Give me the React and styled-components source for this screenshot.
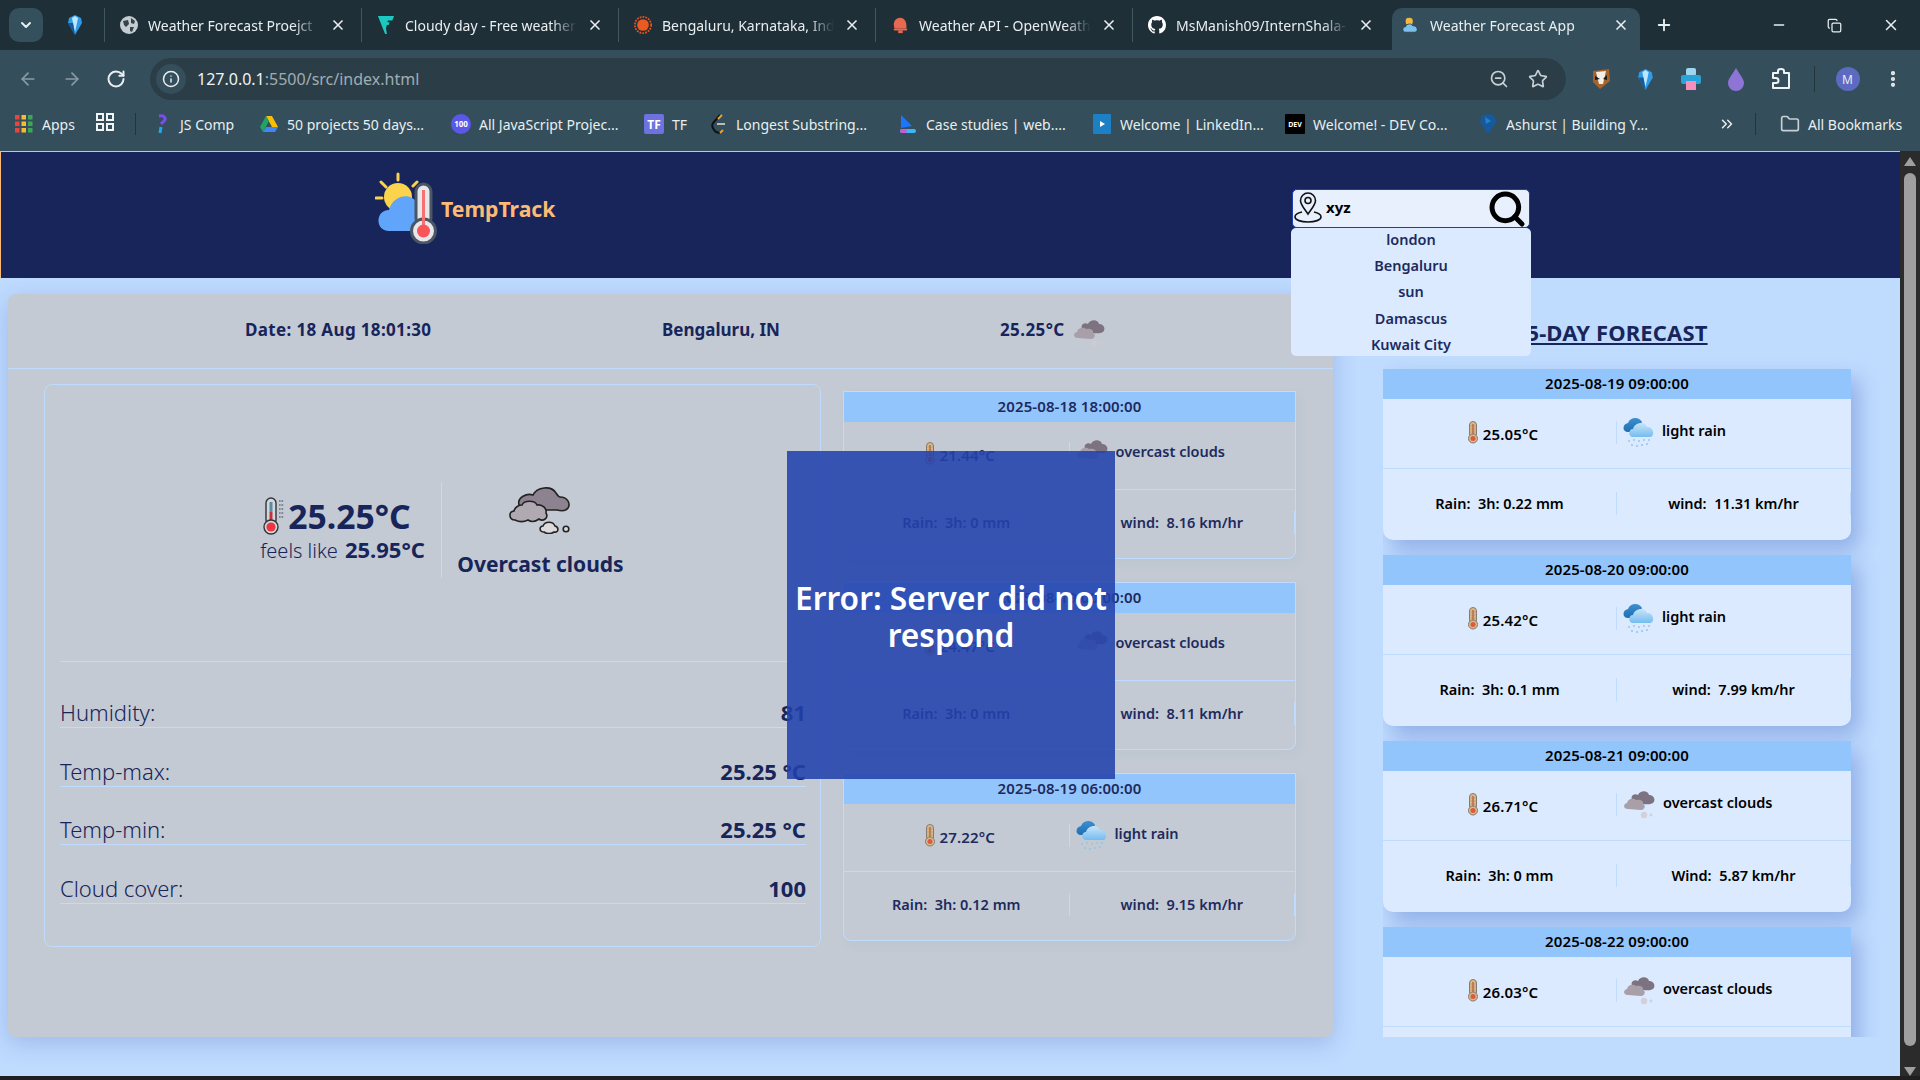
import React from 'react';
import styled, { createGlobalStyle } from 'styled-components';
import {
  ArrowLeft,
  ArrowRight,
  RotateCw,
  Info,
  ZoomOut,
  Star,
  MoreVertical,
  X,
  Plus,
  Minus,
  Copy,
  ChevronDown,
  ChevronsRight,
  Folder,
  Search,
} from 'lucide-react';

const GlobalStyle = createGlobalStyle`
  html, body {
    margin: 0;
    padding: 0;
    height: 100%;
    overflow: hidden;
    font-family: "Noto Sans", "Open Sans", sans-serif;
  }
  * { box-sizing: border-box; }
`;

const Screen = styled.div`
  width: 1920px;
  height: 1080px;
  display: flex;
  flex-direction: column;
  background-color: #1f1f1f;
  overflow: hidden;
`;

/* browser chrome */
const TabStrip = styled.div`
  height: 50px;
  display: flex;
  align-items: flex-start;
  padding-top: 8px;
  background-color: #1e2f38;
  color: #e9eef0;
`;

const TabMenuButton = styled.div`
  width: 34px;
  height: 34px;
  margin-left: 9px;
  border-radius: 10px;
  background-color: #33505c;
  display: flex;
  align-items: center;
  justify-content: center;
`;

const PinnedTab = styled.div`
  width: 61px;
  height: 34px;
  display: flex;
  align-items: center;
  padding-left: 23px;
`;

const Tab = styled.div`
  width: ${(p) => (p.$active ? '248px' : '257px')};
  height: ${(p) => (p.$active ? '42px' : '34px')};
  display: flex;
  align-items: center;
  padding: ${(p) => (p.$active ? '0 11px 8px 10px' : '0 15px')};
  gap: 10px;
  font-size: 14px;
  border-left: ${(p) => (p.$active ? 'none' : '1px solid #41575f')};
  background-color: ${(p) => (p.$active ? '#344f5b' : 'transparent')};
  border-radius: ${(p) => (p.$active ? '10px 10px 0 0' : '0')};
  margin-left: ${(p) => (p.$active ? '3px' : '0')};
`;

const TabIcon = styled.span`
  width: 18px;
  height: 20px;
  flex-shrink: 0;
  display: flex;
  align-items: center;
  justify-content: center;
`;

const TabTitle = styled.span`
  flex: 1;
  white-space: nowrap;
  overflow: hidden;
  mask-image: linear-gradient(to right, #000 85%, transparent);
`;

const NewTab = styled.div`
  margin-left: 15px;
  height: 34px;
  display: flex;
  align-items: center;
`;

const WindowButtons = styled.div`
  margin-left: auto;
  height: 34px;
  display: flex;
  align-items: center;
  gap: 40px;
  padding-right: 20px;
`;

const Toolbar = styled.div`
  height: 58px;
  display: flex;
  align-items: flex-start;
  padding: 8px 0 0 18px;
  background-color: #344f5b;
  color: #e9eef0;
`;

const NavGroup = styled.div`
  width: 132px;
  height: 42px;
  display: flex;
  align-items: center;
  gap: 24px;
`;

const Omnibox = styled.div`
  width: 1416px;
  height: 42px;
  border-radius: 21px;
  background-color: #2b3e47;
  display: flex;
  align-items: center;
  padding: 0 18px 0 6px;
  font-size: 16px;
`;

const SiteInfo = styled.div`
  width: 30px;
  height: 30px;
  border-radius: 50%;
  background-color: #344f5b;
  display: flex;
  align-items: center;
  justify-content: center;
  margin-right: 11px;
`;

const UrlHost = styled.span`
  color: #f0f4f5;
`;

const UrlPath = styled.span`
  color: #a0adb2;
`;

const OmniIcons = styled.div`
  margin-left: auto;
  display: flex;
  align-items: center;
  gap: 19px;
  color: #c7d0d4;
`;

const Extensions = styled.div`
  flex: 1;
  height: 42px;
  display: flex;
  align-items: center;
  padding-left: 12px;
`;

const ExtSlot = styled.div`
  width: 45px;
  flex-shrink: 0;
  display: flex;
  align-items: center;
  justify-content: center;
`;

const ToolbarSep = styled.div`
  width: 1px;
  height: 26px;
  background-color: #22343c;
  margin: 0 10px 0 11px;
`;

const Avatar = styled.div`
  width: 24px;
  height: 24px;
  border-radius: 50%;
  background-color: #5c6bc0;
  color: #e8eaf6;
  font-size: 12px;
  display: flex;
  align-items: center;
  justify-content: center;
`;

const BookmarksBar = styled.div`
  height: 43px;
  display: flex;
  align-items: flex-start;
  padding: 5px 0 0 14px;
  background-color: #344f5b;
  color: #e9eef0;
  font-size: 14px;
`;

const Bookmark = styled.div`
  width: ${(p) => p.$width}px;
  height: 22px;
  display: flex;
  align-items: center;
  gap: 8px;
  white-space: nowrap;
  flex-shrink: 0;
`;

const BookmarkGlyph = styled.span`
  width: 20px;
  height: 22px;
  flex-shrink: 0;
  display: flex;
  align-items: center;
  justify-content: center;
`;

const BookmarksEnd = styled.div`
  margin-left: auto;
  height: 22px;
  display: flex;
  align-items: center;
  padding-right: 18px;
`;

const BookmarkSep = styled.div`
  width: 1px;
  height: 22px;
  background-color: #22343c;
  margin: ${(p) => (p.$end ? '0 24px 0 19px' : '0 16px 0 21px')};
`;

/* page */
const Viewport = styled.div`
  height: 927px;
  display: flex;
  border-bottom: 2px solid #1f1f1f;
`;

const Page = styled.div`
  width: 1900px;
  background-color: #bfdbfe;
  display: flex;
  flex-direction: column;
`;

const Header = styled.header`
  height: 127px;
  flex-shrink: 0;
  background-color: #17255a;
  border-top: 1px solid #fdba74;
  border-left: 1px solid #fdba74;
  display: flex;
  align-items: flex-start;
  padding: 20px 0 0 374px;
`;

const Logo = styled.div`
  width: 852px;
  display: flex;
  align-items: center;
  height: 72px;
`;

const LogoText = styled.span`
  font-size: 21.2px;
  font-weight: 700;
  color: #fdba74;
`;

const SearchWrap = styled.div`
  position: relative;
  margin: 17px 0 0 65px;
`;

const SearchBox = styled.div`
  width: 238px;
  height: 39px;
  background-color: #e8effd;
  border: 1px solid #1e40af;
  border-radius: 5px;
  display: flex;
  align-items: center;
  padding: 0 2px 0 1px;
  font-size: 15px;
  font-weight: 700;
  color: #000;
`;

const PinHolder = styled.span`
  display: flex;
  margin-top: -3px;
`;

const SearchValue = styled.span`
  flex: 1;
  margin: -3px 0 0 4px;
`;

const Suggestions = styled.ul`
  position: absolute;
  top: 39px;
  left: -1px;
  width: 240px;
  height: 128px;
  margin: 0;
  padding: 0;
  list-style: none;
  background-color: #dbeafe;
  border-radius: 5px;
  z-index: 5;
`;

const Suggestion = styled.li`
  height: 26.2px;
  line-height: 22px;
  text-align: center;
  font-size: 14.5px;
  font-weight: 600;
  color: #1e2a5e;
`;

const Content = styled.div`
  flex: 1;
  position: relative;
  display: flex;
  align-items: flex-start;
  gap: 50px;
  padding: 16px 0 0 8px;
  overflow: hidden;
`;

const MainPanel = styled.section`
  width: 1325px;
  height: 743px;
  flex-shrink: 0;
  background-color: #c3cad3;
  border-radius: 8px;
  box-shadow: 0 6px 24px rgba(30, 64, 175, 0.22);
`;

const SummaryBar = styled.div`
  height: 75px;
  display: grid;
  grid-template-columns: 417px 338px auto;
  align-items: center;
  padding: 0 0 3px 237px;
  border-bottom: 1px solid #bfdbfe;
  font-size: 17px;
  font-weight: 700;
  color: #17255a;
`;

const SummaryDate = styled.span`
  letter-spacing: 0.35px;
`;

const SummaryTemp = styled.div`
  display: flex;
  align-items: center;
  gap: 8px;
  letter-spacing: 0.4px;
`;

const SummaryIcon = styled.span`
  display: flex;
  margin-top: 8px;
`;

const PanelBody = styled.div`
  display: flex;
  align-items: flex-start;
  gap: 22px;
  padding: 15px 0 0 36px;
`;

const CurrentCard = styled.div`
  width: 777px;
  height: 563px;
  border: 1px solid #bfdbfe;
  border-radius: 8px;
  padding: 0 14px 0 15px;
  color: #17255a;
`;

const CurrentTop = styled.div`
  height: 277px;
  display: flex;
  align-items: center;
  justify-content: center;
  padding: 14px 0 0 31px;
  border-bottom: 1px solid #bfdbfe;
`;

const TempBlock = styled.div`
  width: 184px;
  padding-right: 13px;
  display: flex;
  flex-direction: column;
  align-items: center;
  height: 96px;
  justify-content: center;
  border-right: 1px solid #bfdbfe;
`;

const TempLine = styled.div`
  display: flex;
  align-items: center;
  font-size: 33.7px;
  font-weight: 700;
  line-height: 40px;
  gap: 3px;
  margin-left: -13px;
`;

const FeelsLine = styled.div`
  font-size: 20px;
  font-weight: 300;
  line-height: 26px;
  white-space: nowrap;
`;

const FeelsValue = styled.b`
  font-size: 22px;
  font-weight: 700;
  margin-left: 7px;
`;

const ConditionBlock = styled.div`
  width: 198px;
  display: flex;
  flex-direction: column;
  align-items: center;
  font-size: 21px;
  font-weight: 700;
  white-space: nowrap;
  gap: 16px;
  padding-top: 2px;
`;

const StatRows = styled.div`
  padding-top: 8px;
`;

const StatRow = styled.div`
  height: ${(p) => (p.$first ? '58px' : '58.5px')};
  display: flex;
  align-items: flex-end;
  justify-content: space-between;
  border-bottom: 1px solid #bfdbfe;
  font-size: 22px;
  font-weight: 300;
  line-height: 30px;
`;

const StatValue = styled.span`
  font-weight: 700;
`;

const HourlyColumn = styled.div`
  width: 453px;
  display: flex;
  flex-direction: column;
  gap: 23px;
  padding-top: 7px;
  color: #1e2a5e;
`;

const ForecastCard = styled.article`
  height: ${(p) => (p.$daily ? '171px' : '168px')};
  flex-shrink: 0;
  border: ${(p) => (p.$daily ? 'none' : '1px solid #bfdbfe')};
  background-color: ${(p) => (p.$daily ? '#dbeafe' : 'transparent')};
  color: ${(p) => (p.$daily ? '#000' : '#1e2a5e')};
  border-radius: ${(p) => (p.$daily ? '0 0 10px 10px' : '0 0 8px 8px')};
  box-shadow: ${(p) => (p.$daily ? '8px 10px 20px rgba(30, 64, 175, 0.28)' : '4px 4px 12px rgba(30, 64, 175, 0.04)')};
  font-size: 14.5px;
  font-weight: 600;
`;

const CardHead = styled.div`
  height: 30px;
  background-color: #93c5fd;
  text-align: center;
  line-height: 29px;
  font-size: 15px;
  letter-spacing: 0.1px;
  font-weight: 600;
`;

const CardRow = styled.div`
  height: ${(p) => p.$height}px;
  display: grid;
  grid-template-columns: 1fr 1fr;
  align-items: center;
  padding-bottom: ${(p) => p.$lift}px;
  border-top: ${(p) => (p.$top ? 'none' : '1px solid #bfdbfe')};
`;

const CardCell = styled.div`
  height: 23px;
  display: flex;
  align-items: center;
  justify-content: center;
  border-right: 1px solid #bfdbfe;
  white-space: nowrap;
  gap: 5px;
`;

const TempCell = styled(CardCell)`
  padding-left: 7px;
`;

const WeatherCell = styled.div`
  height: 23px;
  display: flex;
  align-items: center;
  gap: 8px;
  padding-left: 6px;
  white-space: nowrap;
`;

const WeatherText = styled.span`
  margin-top: -5px;
`;

const TempText = styled.span`
  margin-top: 2px;
  font-size: 15px;
  letter-spacing: 0.15px;
`;

const DailyColumn = styled.aside`
  width: 517px;
  height: 743px;
  flex-shrink: 0;
  overflow: hidden;
`;

const DailyTitle = styled.h2`
  width: 468px;
  height: 75px;
  margin: 0;
  padding-top: 21px;
  text-align: center;
  font-size: 22px;
  letter-spacing: 0.15px;
  line-height: 34px;
  font-weight: 700;
  color: #17255a;
  text-decoration: underline;
`;

const DailyList = styled.div`
  width: 468px;
  display: flex;
  flex-direction: column;
  gap: 15px;
`;

const ErrorToast = styled.div`
  position: absolute;
  left: 787px;
  top: 173px;
  width: 328px;
  height: 328px;
  background-color: rgba(34, 66, 172, 0.88);
  color: #fff;
  display: flex;
  align-items: center;
  justify-content: center;
  text-align: center;
  font-size: 31.7px;
  font-weight: 600;
  line-height: 37px;
  padding: 2px 6px 0;
  z-index: 4;
`;

/* fake browser scrollbar */
const ScrollTrack = styled.div`
  width: 20px;
  background-color: #2b2b2b;
  display: flex;
  flex-direction: column;
  align-items: center;
  padding-top: 6px;
`;

const ScrollThumb = styled.div`
  width: 12px;
  height: 884px;
  margin-top: 7px;
  border-radius: 6px;
  background-color: #9f9f9f;
`;

const ScrollArrow = styled.div`
  width: 0;
  height: 0;
  border-left: 6px solid transparent;
  border-right: 6px solid transparent;
  border-bottom: ${(p) => (p.$down ? 'none' : '9px solid #9f9f9f')};
  border-top: ${(p) => (p.$down ? '9px solid #9f9f9f' : 'none')};
  margin-top: ${(p) => (p.$down ? '21px' : '0')};
`;

/* drawn icons */
const Gem = ({ size = 18 }) => (
  <svg width={size} height={size + 4} viewBox="0 0 18 22">
    <path d="M3 4 L9 1 L15 4 L16 9 L9 21 L2 9 Z" fill="#2f9be8" />
    <path d="M6 4 L9 2 L12 4 L11 9 L9 18 L7 9 Z" fill="#bfe6ff" />
    <path d="M9 21 L2 9 L7 9 Z" fill="#135a9a" />
  </svg>
);

const Globe = () => (
  <svg width="18" height="18" viewBox="0 0 18 18">
    <circle cx="9" cy="9" r="9" fill="#c5ccd0" />
    <path d="M3 5 L8 4 L9 8 L6 11 L4 9 Z M11 2 L15 5 L14 8 L11 7 Z M10 11 L14 11 L12 16 L10 15 Z" fill="#34424a" />
  </svg>
);

const Vee = () => (
  <svg width="20" height="22" viewBox="0 0 20 22">
    <path d="M1 1 L19 1 L17 6 L12 6 L10 15 L11 21 L9 21 Z" fill="#1cc8c0" />
    <path d="M8 8 L14 8 L13 11 L9 11 Z" fill="#1cc8c0" />
  </svg>
);

const SunBadge = () => (
  <svg width="20" height="20" viewBox="0 0 20 20">
    <circle cx="10" cy="10" r="9" fill="none" stroke="#e2521f" strokeWidth="2" strokeDasharray="2 1.2" />
    <circle cx="10" cy="10" r="6.5" fill="#ea5a22" />
  </svg>
);

const Blob = () => (
  <svg width="20" height="20" viewBox="0 0 20 20">
    <path d="M4 14 C1 6 6 2 10 2 C15 2 18 7 17 14 Z" fill="#e8694f" />
    <rect x="3" y="14" width="15" height="2" rx="1" fill="#e8694f" />
    <rect x="8" y="16" width="5" height="3" fill="#e8694f" />
  </svg>
);

const GithubMark = () => (
  <svg width="20" height="20" viewBox="0 0 16 16" fill="#fff">
    <path d="M8 0C3.58 0 0 3.58 0 8c0 3.54 2.29 6.53 5.47 7.59.4.07.55-.17.55-.38 0-.19-.01-.82-.01-1.49-2.01.37-2.53-.49-2.69-.94-.09-.23-.48-.94-.82-1.13-.28-.15-.68-.52-.01-.53.63-.01 1.08.58 1.23.82.72 1.21 1.87.87 2.33.66.07-.52.28-.87.51-1.07-1.78-.2-3.64-.89-3.64-3.95 0-.87.31-1.59.82-2.15-.08-.2-.36-1.02.08-2.12 0 0 .67-.21 2.2.82.64-.18 1.32-.27 2-.27s1.36.09 2 .27c1.53-1.04 2.2-.82 2.2-.82.44 1.1.16 1.92.08 2.12.51.56.82 1.27.82 2.15 0 3.07-1.87 3.75-3.65 3.95.29.25.54.73.54 1.48 0 1.07-.01 1.93-.01 2.2 0 .21.15.46.55.38A8.01 8.01 0 0016 8c0-4.42-3.58-8-8-8z" />
  </svg>
);

const MiniWeather = () => (
  <svg width="20" height="20" viewBox="0 0 20 20">
    <circle cx="8" cy="6" r="4.5" fill="#f4b942" stroke="#2a3a44" strokeWidth="0.8" />
    <path d="M4 18 C0 18 0 12 4 12 C5 8 11 8 12 11 C17 10 19 18 14 18 Z" fill="#7cc0ee" stroke="#2a3a44" strokeWidth="0.8" />
  </svg>
);

const BookmarkIcon = ({ kind }) => {
  if (kind === 'js') {
    return (
      <svg width="16" height="20" viewBox="0 0 16 20">
        <path d="M5 2 C11 1 13 5 9 8 L7 10" fill="none" stroke="#7b4df0" strokeWidth="3" />
        <path d="M7 13 L6 19" stroke="#1fa8f0" strokeWidth="3" />
      </svg>
    );
  }
  if (kind === 'drive') {
    return (
      <svg width="20" height="18" viewBox="0 0 20 18">
        <path d="M7 1 L13 1 L19 12 L13 12 Z" fill="#fbbc04" />
        <path d="M7 1 L1 12 L4 17 L10 6 Z" fill="#1fa463" />
        <path d="M4 17 L16 17 L19 12 L7 12 Z" fill="#4285f4" />
      </svg>
    );
  }
  if (kind === 'hundred') {
    return (
      <svg viewBox="0 0 20 20" width="20" height="20">
        <circle cx="10" cy="10" r="10" fill="#5b57e8" />
        <text x="10" y="12.5" textAnchor="middle" fontSize="8" fontWeight="700" fill="#fff">100</text>
      </svg>
    );
  }
  if (kind === 'tf') {
    return (
      <svg width="20" height="20" viewBox="0 0 20 20">
        <rect width="20" height="20" rx="2" fill="#6c72e0" />
        <text x="10" y="14.5" textAnchor="middle" fontSize="12" fontWeight="700" fill="#fff">TF</text>
      </svg>
    );
  }
  if (kind === 'lc') {
    return (
      <svg width="16" height="20" viewBox="0 0 16 20">
        <path d="M10 1 L3 9 C1 12 3 15 6 18 L10 19" fill="none" stroke="#111" strokeWidth="2" />
        <path d="M12 1 L8 5 M10 19 L13 16" stroke="#f59f1c" strokeWidth="2" />
        <path d="M7 10 L15 10" stroke="#bbb" strokeWidth="2" />
      </svg>
    );
  }
  if (kind === 'case') {
    return (
      <svg width="20" height="20" viewBox="0 0 20 20">
        <path d="M3 1 L14 12 L3 14 Z" fill="#1976ff" />
        <rect x="2" y="15" width="16" height="4" rx="2" fill="#39b8f5" />
        <rect x="2" y="15" width="7" height="4" rx="2" fill="#c85bd6" />
      </svg>
    );
  }
  if (kind === 'linkedin') {
    return (
      <svg width="18" height="20" viewBox="0 0 18 20">
        <rect width="18" height="20" rx="1" fill="#1d7fc4" />
        <path d="M7 7 L12 10 L7 13 Z" fill="#fff" />
      </svg>
    );
  }
  if (kind === 'dev') {
    return (
      <svg width="20" height="20" viewBox="0 0 20 20">
        <rect width="20" height="20" rx="1" fill="#000" />
        <text x="10" y="13" textAnchor="middle" fontSize="7" fontWeight="700" fill="#fff">DEV</text>
      </svg>
    );
  }
  return (
    <svg width="20" height="22" viewBox="0 0 20 22">
      <path d="M4 2 L14 1 L19 8 L10 21 L2 9 Z" fill="#155a9c" />
      <path d="M7 4 L13 8 L8 11 Z" fill="#2d7fc9" />
    </svg>
  );
};

const AppsGrid = () => (
  <svg width="18" height="18" viewBox="0 0 18 18">
    {[0, 1, 2].map((row) =>
      ['#e8453c', '#f9bb2d', '#3aa757'].map((color, col) => (
        <rect key={`${row}-${col}`} x={col * 6.5} y={row * 6.5} width="4.5" height="4.5" fill={color} />
      ))
    )}
  </svg>
);

const QrGrid = () => (
  <svg width="18" height="18" viewBox="0 0 18 18" fill="none" stroke="#f0f4f5" strokeWidth="2">
    <rect x="1" y="1" width="6" height="6" />
    <rect x="11" y="1" width="6" height="6" />
    <rect x="1" y="11" width="6" height="6" />
    <rect x="11" y="11" width="6" height="6" />
  </svg>
);

const BadgerIcon = () => (
  <svg width="22" height="22" viewBox="0 0 22 22">
    <path d="M3 3 L19 1 L20 13 L10 21 L3 14 Z" fill="#a8622c" />
    <path d="M6 4 L16 3 L13 16 L9 16 Z" fill="#f2efe8" />
    <path d="M5 8 L10 11 L5 12 Z M17 7 L13 11 L17 12 Z" fill="#1b1b1b" />
  </svg>
);

const PrinterIcon = () => (
  <svg width="22" height="24" viewBox="0 0 22 24">
    <rect x="6" y="1" width="10" height="8" rx="2" fill="#9fd6ef" />
    <rect x="1" y="8" width="20" height="9" rx="2" fill="#29a3d8" />
    <rect x="6" y="14" width="10" height="9" fill="#f58fbb" />
  </svg>
);

const DropIcon = () => (
  <svg width="18" height="24" viewBox="0 0 18 24">
    <path d="M9 1 C13 8 17 12 17 16 A8 8 0 0 1 1 16 C1 12 5 8 9 1 Z" fill="#8f74d8" />
  </svg>
);

const ExtensionPiece = () => (
  <svg width="20" height="22" viewBox="0 0 20 22" fill="none" stroke="#f0f4f5" strokeWidth="2" strokeLinejoin="round">
    <path d="M2 5 H7 V3 A3 2 0 0 1 13 3 V5 H18 V20 H2 V15 H5 A2.5 2.5 0 0 0 5 10 H2 Z" />
  </svg>
);

const LogoMark = () => (
  <svg width="66" height="72" viewBox="0 0 66 72">
    <g stroke="#fcd34d" strokeWidth="3" strokeLinecap="round">
      <path d="M23 2 V8 M6 10 L11 15 M42 10 L38 14 M1 26 H7" />
    </g>
    <circle cx="23" cy="25" r="14" fill="#fcd34d" />
    <path d="M14 59 C0 59 0 38 14 38 C18 22 38 20 42 32 L46 59 Z" fill="#60a5fa" />
    <rect x="41" y="12" width="15" height="42" rx="7.5" fill="#e5e7eb" stroke="#4b5563" strokeWidth="3" />
    <circle cx="48.5" cy="59" r="12" fill="#e5e7eb" stroke="#4b5563" strokeWidth="3" />
    <rect x="47" y="18" width="3" height="38" fill="#f87171" />
    <circle cx="48.5" cy="59" r="6.5" fill="#f8555a" />
  </svg>
);

const PinIcon = () => (
  <svg width="28" height="31" viewBox="0 0 28 31" fill="none" stroke="#111" strokeWidth="1.6">
    <path d="M14 22 C9 15 6.5 12.5 6.5 8.5 A7.5 7.5 0 0 1 21.5 8.5 C21.5 12.5 19 15 14 22 Z" />
    <circle cx="14" cy="8.5" r="3" />
    <path d="M8 20 C3 21 1 23 1 25 C1 28 7 30 14 30 C21 30 27 28 27 25 C27 23 25 21 20 20" />
  </svg>
);

const BigThermo = () => (
  <svg width="24" height="38" viewBox="0 0 24 38">
    <rect x="5" y="1" width="10" height="27" rx="5" fill="#cfd8df" stroke="#333" strokeWidth="1.4" />
    <rect x="8.5" y="5" width="3" height="10" fill="#5b8aa3" />
    <rect x="8.5" y="15" width="3" height="14" fill="#c8313c" />
    <circle cx="10" cy="30" r="7" fill="#cfd8df" stroke="#333" strokeWidth="1.4" />
    <circle cx="10" cy="30" r="4.6" fill="#ef3340" />
    <path d="M18 4 H23 M18 8 H23 M18 12 H23 M18 16 H23 M18 20 H23" stroke="#6b7280" strokeWidth="1.4" strokeDasharray="1.6 .8" />
  </svg>
);

const SmallThermo = () => (
  <svg width="10" height="23" viewBox="0 0 10 23">
    <rect x="1.5" y="0.5" width="7" height="16" rx="3.5" fill="#d9b98a" stroke="#857a6c" />
    <rect x="4" y="3" width="2" height="12" fill="#c97a55" />
    <path d="M2.5 5 H7.5 M2.5 8 H7.5 M2.5 11 H7.5" stroke="#a08a6a" strokeWidth="0.6" />
    <circle cx="5" cy="17.5" r="4.5" fill="#d9b98a" stroke="#857a6c" />
    <circle cx="5" cy="17.5" r="2.5" fill="#dd5a3f" />
  </svg>
);

const BigCloud = () => (
  <svg width="64" height="49" viewBox="0 0 64 49" stroke="#222" strokeWidth="1.6">
    <path d="M10 20 C8 12 18 8 24 10 C28 2 42 0 47 8 C49 11 50 12 51 12 C58 12 62 18 59 23 C57 26 52 26 48 25 L20 25 Z" fill="#8d8290" />
    <path d="M6 35 C0 35 -1 27 5 26 C6 22 10 20 13 20 C15 15 26 15 28 20 C34 19 38 24 37 28 C40 33 34 37 30 34 C26 37 22 37 19 35 C15 37 10 37 6 35 Z" fill="#b1a9b2" />
    <path d="M35 47 C30 47 30 41 34 41 C36 36 44 36 46 41 C50 42 50 48 45 47 C42 49 38 49 35 47 Z" fill="#ddd9dc" />
    <circle cx="57" cy="44" r="2.8" fill="#ddd9dc" />
  </svg>
);

const SmallCloud = () => (
  <svg width="32" height="30" viewBox="0 0 32 30">
    <path d="M9 10 C7 5 12 3 15 5 C17 0 25 0 26 5 C31 5 33 10 30 13 C27 15 22 14 20 14 L9 14 Z" fill="#7c7280" />
    <path d="M5 19 C0 19 0 14 4 13 C5 8 11 8 13 10 C17 9 21 11 20 14 C23 15 22 20 18 20 Z" fill="#a89fa9" />
    <circle cx="21" cy="25" r="3.2" fill="#cfcad0" opacity="0.8" />
    <circle cx="28" cy="25" r="1.4" fill="#cfcad0" opacity="0.8" />
  </svg>
);

const RainCloud = () => (
  <svg width="31" height="31" viewBox="0 0 31 31">
    <defs>
      <linearGradient id="rainBack" x1="0" y1="0" x2="0" y2="1">
        <stop offset="0" stopColor="#3c8fd0" />
        <stop offset="1" stopColor="#1f6fb2" />
      </linearGradient>
      <linearGradient id="rainFront" x1="0" y1="0" x2="0" y2="1">
        <stop offset="0" stopColor="#c8e4f8" />
        <stop offset="1" stopColor="#74bcf0" />
      </linearGradient>
    </defs>
    <path d="M5 15 C-1 15 -1 7 5 6 C7 0 16 -1 19 5 L14 15 Z" fill="url(#rainBack)" />
    <path d="M10 20 C5 20 5 12 10 12 C12 5 22 4 24 10 C31 9 32 20 27 20 Z" fill="url(#rainFront)" />
    <g fill="#8fc4ea">
      <circle cx="6" cy="24" r="0.9" />
      <circle cx="11" cy="23" r="0.9" />
      <circle cx="16" cy="24" r="0.9" />
      <circle cx="21" cy="23" r="0.9" />
      <circle cx="26" cy="23" r="0.9" />
      <circle cx="9" cy="28" r="1" />
      <circle cx="14" cy="29" r="1" />
      <circle cx="19" cy="28" r="1" />
      <circle cx="24" cy="27" r="1" />
    </g>
  </svg>
);

const tabs = [
  { title: 'Weather Forecast Proejct', icon: <Globe /> },
  { title: 'Cloudy day - Free weather', icon: <Vee /> },
  { title: 'Bengaluru, Karnataka, India', icon: <SunBadge /> },
  { title: 'Weather API - OpenWeather', icon: <Blob /> },
  { title: 'MsManish09/InternShala-', icon: <GithubMark /> },
];

const bookmarks = [
  { kind: 'js', label: 'JS Comp', width: 107 },
  { kind: 'drive', label: '50 projects 50 days...', width: 192 },
  { kind: 'hundred', label: 'All JavaScript Projec...', width: 193 },
  { kind: 'tf', label: 'TF', width: 64 },
  { kind: 'lc', label: 'Longest Substring...', width: 190 },
  { kind: 'case', label: 'Case studies | web....', width: 194 },
  { kind: 'linkedin', label: 'Welcome | LinkedIn...', width: 193 },
  { kind: 'dev', label: 'Welcome! - DEV Co...', width: 193 },
  { kind: 'ashurst', label: 'Ashurst | Building Y...', width: 170 },
];

const suggestions = ['london', 'Bengaluru', 'sun', 'Damascus', 'Kuwait City'];

const stats = [
  { label: 'Humidity:', value: '81' },
  { label: 'Temp-max:', value: '25.25 °C' },
  { label: 'Temp-min:', value: '25.25 °C' },
  { label: 'Cloud cover:', value: '100' },
];

const hourly = [
  { time: '2025-08-18 18:00:00', temp: '21.44°C', sky: 'overcast clouds', rain: '3h: 0 mm', wind: 'wind:', speed: '8.16 km/hr' },
  { time: '2025-08-19 00:00:00', temp: '24.47°C', sky: 'overcast clouds', rain: '3h: 0 mm', wind: 'wind:', speed: '8.11 km/hr' },
  { time: '2025-08-19 06:00:00', temp: '27.22°C', sky: 'light rain', rain: '3h: 0.12 mm', wind: 'wind:', speed: '9.15 km/hr' },
];

const daily = [
  { time: '2025-08-19 09:00:00', temp: '25.05°C', sky: 'light rain', rain: '3h: 0.22 mm', wind: 'wind:', speed: '11.31 km/hr' },
  { time: '2025-08-20 09:00:00', temp: '25.42°C', sky: 'light rain', rain: '3h: 0.1 mm', wind: 'wind:', speed: '7.99 km/hr' },
  { time: '2025-08-21 09:00:00', temp: '26.71°C', sky: 'overcast clouds', rain: '3h: 0 mm', wind: 'Wind:', speed: '5.87 km/hr' },
  { time: '2025-08-22 09:00:00', temp: '26.03°C', sky: 'overcast clouds', rain: '3h: 0 mm', wind: 'wind:', speed: '6.02 km/hr' },
];

const Forecast = ({ item, isDaily }) => (
  <ForecastCard $daily={isDaily}>
    <CardHead>{item.time}</CardHead>
    <CardRow $top $height={isDaily ? 69 : 67} $lift={isDaily ? 2 : 4}>
      <TempCell>
        <SmallThermo />
        <TempText>{item.temp}</TempText>
      </TempCell>
      <WeatherCell>
        {item.sky === 'light rain' ? <RainCloud /> : <SmallCloud />}
        <WeatherText>{item.sky}</WeatherText>
      </WeatherCell>
    </CardRow>
    <CardRow $height={isDaily ? 72 : 69} $lift={isDaily ? 3 : 4}>
      <CardCell>Rain:&nbsp; {item.rain}</CardCell>
      <CardCell>{item.wind}&nbsp; {item.speed}</CardCell>
    </CardRow>
  </ForecastCard>
);

const App = () => {
  return (
    <Screen>
      <GlobalStyle />
      <TabStrip>
        <TabMenuButton>
          <ChevronDown size={16} strokeWidth={3} />
        </TabMenuButton>
        <PinnedTab>
          <Gem />
        </PinnedTab>
        {tabs.map((tab) => (
          <Tab key={tab.title}>
            <TabIcon>{tab.icon}</TabIcon>
            <TabTitle>{tab.title}</TabTitle>
            <X size={16} strokeWidth={2.5} />
          </Tab>
        ))}
        <Tab $active>
          <TabIcon>
            <MiniWeather />
          </TabIcon>
          <TabTitle>Weather Forecast App</TabTitle>
          <X size={16} strokeWidth={2.5} />
        </Tab>
        <NewTab>
          <Plus size={18} strokeWidth={2.5} />
        </NewTab>
        <WindowButtons>
          <Minus size={16} />
          <Copy size={15} />
          <X size={18} />
        </WindowButtons>
      </TabStrip>

      <Toolbar>
        <NavGroup>
          <ArrowLeft size={20} color="#8b9ba2" />
          <ArrowRight size={20} color="#8b9ba2" />
          <RotateCw size={20} strokeWidth={2.4} />
        </NavGroup>
        <Omnibox>
          <SiteInfo>
            <Info size={18} />
          </SiteInfo>
          <UrlHost>127.0.0.1</UrlHost>
          <UrlPath>:5500/src/index.html</UrlPath>
          <OmniIcons>
            <ZoomOut size={20} />
            <Star size={20} />
          </OmniIcons>
        </Omnibox>
        <Extensions>
          <ExtSlot>
            <BadgerIcon />
          </ExtSlot>
          <ExtSlot>
            <Gem size={19} />
          </ExtSlot>
          <ExtSlot>
            <PrinterIcon />
          </ExtSlot>
          <ExtSlot>
            <DropIcon />
          </ExtSlot>
          <ExtSlot>
            <ExtensionPiece />
          </ExtSlot>
          <ToolbarSep />
          <ExtSlot>
            <Avatar>M</Avatar>
          </ExtSlot>
          <ExtSlot>
            <MoreVertical size={20} strokeWidth={3} />
          </ExtSlot>
        </Extensions>
      </Toolbar>

      <BookmarksBar>
        <Bookmark $width={82}>
          <BookmarkGlyph>
            <AppsGrid />
          </BookmarkGlyph>
          Apps
        </Bookmark>
        <QrGrid />
        <BookmarkSep />
        {bookmarks.map((b) => (
          <Bookmark key={b.label} $width={b.width}>
            <BookmarkGlyph>
              <BookmarkIcon kind={b.kind} />
            </BookmarkGlyph>
            {b.label}
          </Bookmark>
        ))}
        <BookmarksEnd>
          <ChevronsRight size={18} />
          <BookmarkSep $end />
          <Bookmark $width={122}>
            <BookmarkGlyph>
              <Folder size={20} color="#c7d0d4" />
            </BookmarkGlyph>
            All Bookmarks
          </Bookmark>
        </BookmarksEnd>
      </BookmarksBar>

      <Viewport>
        <Page>
          <Header>
            <Logo>
              <LogoMark />
              <LogoText>TempTrack</LogoText>
            </Logo>
            <SearchWrap>
              <SearchBox>
                <PinHolder>
                  <PinIcon />
                </PinHolder>
                <SearchValue>xyz</SearchValue>
                <Search size={40} strokeWidth={3} color="#000" />
              </SearchBox>
              <Suggestions>
                {suggestions.map((city) => (
                  <Suggestion key={city}>{city}</Suggestion>
                ))}
              </Suggestions>
            </SearchWrap>
          </Header>
          <Content>
            <MainPanel>
              <SummaryBar>
                <SummaryDate>Date: 18 Aug 18:01:30</SummaryDate>
                <span>Bengaluru, IN</span>
                <SummaryTemp>
                  25.25°C
                  <SummaryIcon>
                    <SmallCloud />
                  </SummaryIcon>
                </SummaryTemp>
              </SummaryBar>
              <PanelBody>
                <CurrentCard>
                  <CurrentTop>
                    <TempBlock>
                      <TempLine>
                        <BigThermo />
                        25.25°C
                      </TempLine>
                      <FeelsLine>
                        feels like
                        <FeelsValue>25.95°C</FeelsValue>
                      </FeelsLine>
                    </TempBlock>
                    <ConditionBlock>
                      <BigCloud />
                      Overcast clouds
                    </ConditionBlock>
                  </CurrentTop>
                  <StatRows>
                    {stats.map((stat, i) => (
                      <StatRow key={stat.label} $first={i === 0}>
                        <span>{stat.label}</span>
                        <StatValue>{stat.value}</StatValue>
                      </StatRow>
                    ))}
                  </StatRows>
                </CurrentCard>
                <HourlyColumn>
                  {hourly.map((item) => (
                    <Forecast key={item.time} item={item} />
                  ))}
                </HourlyColumn>
              </PanelBody>
            </MainPanel>
            <DailyColumn>
              <DailyTitle>5-DAY FORECAST</DailyTitle>
              <DailyList>
                {daily.map((item) => (
                  <Forecast key={item.time} item={item} isDaily />
                ))}
              </DailyList>
            </DailyColumn>
            <ErrorToast>Error: Server did not respond</ErrorToast>
          </Content>
        </Page>
        <ScrollTrack>
          <ScrollArrow />
          <ScrollThumb />
          <ScrollArrow $down />
        </ScrollTrack>
      </Viewport>
    </Screen>
  );
};

export default App;
